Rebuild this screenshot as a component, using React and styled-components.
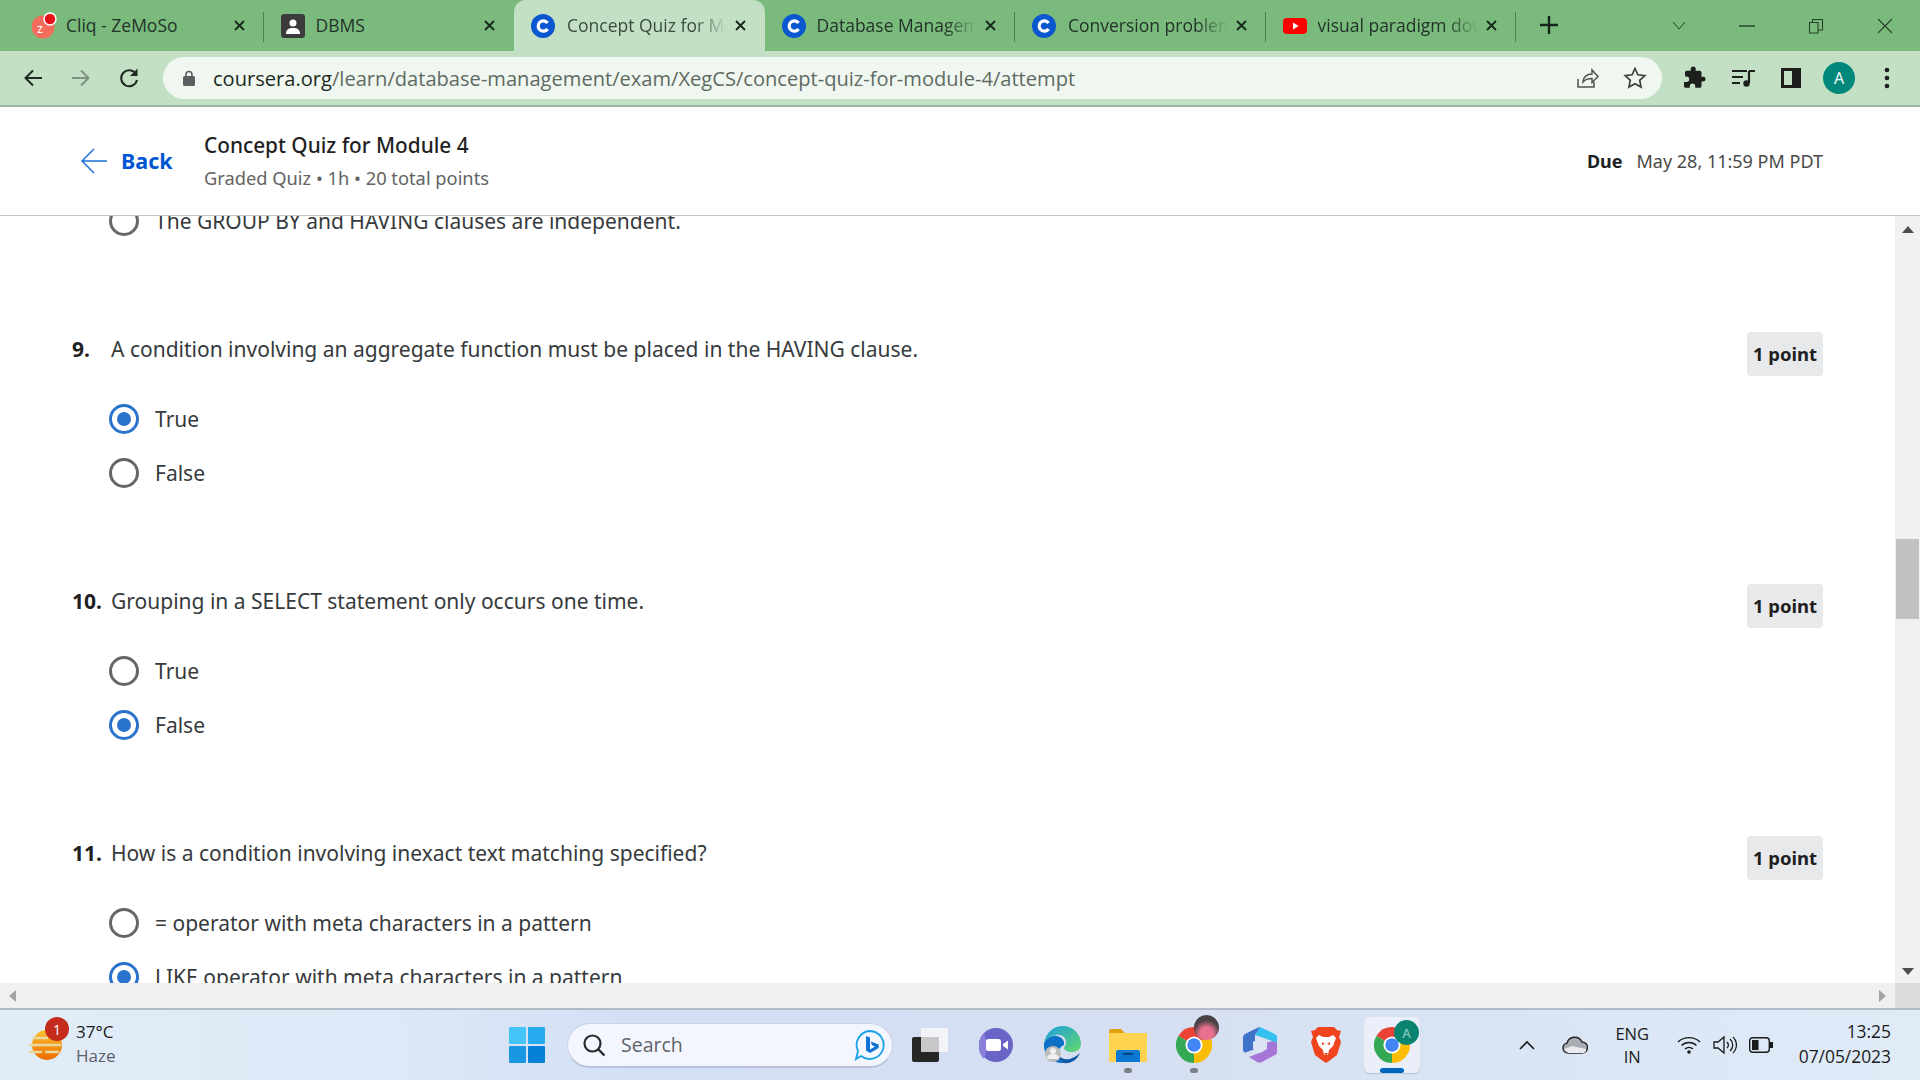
import React from 'react';
import styled, { createGlobalStyle } from 'styled-components';

const GlobalStyle = createGlobalStyle`
  html, body {
    margin: 0;
    padding: 0;
    height: 100%;
    overflow: hidden;
    background: #ffffff;
  }
`;

const uiFont = `'Open Sans', 'Noto Sans', sans-serif`;
const pageFont = `'Noto Sans', 'Open Sans', sans-serif`;

const Screen = styled.div`
  width: 1920px;
  height: 1080px;
  display: flex;
  flex-direction: column;
  overflow: hidden;
  font-family: ${pageFont};
`;

/* browser chrome */
const TabStrip = styled.div`
  height: 51px;
  flex: none;
  display: flex;
  align-items: stretch;
  padding-left: 13px;
  background: #7abb7d;
  font-family: ${uiFont};
`;

const TabItem = styled.div`
  width: 250.5px;
  flex: none;
  box-sizing: border-box;
  display: flex;
  align-items: center;
  padding: 0 19px 0 ${(p) => p.$pad}px;
  position: relative;
  background: ${(p) => (p.$active ? '#c3e0c5' : 'transparent')};
  border-radius: ${(p) => (p.$active ? '12px 12px 0 0' : '0')};

  &::after {
    content: '';
    display: ${(p) => (p.$divider ? 'block' : 'none')};
    position: absolute;
    right: 0;
    top: 12px;
    bottom: 9px;
    width: 1px;
    background: #4d7f53;
  }
`;

const TabTitle = styled.span`
  flex: 1;
  min-width: 0;
  margin-left: ${(p) => p.$gap}px;
  padding-bottom: 2px;
  white-space: nowrap;
  overflow: hidden;
  font-size: 17.5px;
  color: ${(p) => (p.$active ? '#3b4a3f' : '#233329')};
  mask-image: ${(p) => (p.$fade ? 'linear-gradient(to right, #000 80%, transparent 100%)' : 'none')};
`;

const TabClose = styled.svg`
  width: 11px;
  height: 11px;
  flex: none;
  margin-left: 8px;
`;

const NewTab = styled.svg`
  width: 18px;
  height: 18px;
  margin: 16px 0 0 24px;
`;

const WindowControls = styled.div`
  margin-left: auto;
  display: flex;
  align-items: center;
  padding-right: 27px;
  gap: 53px;
`;

const Toolbar = styled.div`
  height: 56px;
  flex: none;
  box-sizing: border-box;
  display: flex;
  align-items: center;
  background: #c3e0c5;
  border-bottom: 2px solid #9db5a0;
`;

const NavButton = styled.div`
  width: 48px;
  height: 24px;
  flex: none;
  display: flex;
  align-items: center;
  justify-content: center;
`;

const NavGroup = styled.div`
  display: flex;
  padding-left: 9px;
  width: 163px;
  box-sizing: border-box;
`;

const Omnibox = styled.div`
  width: 1499px;
  height: 42px;
  flex: none;
  box-sizing: border-box;
  display: flex;
  align-items: center;
  padding: 0 15px 0 20px;
  border-radius: 21px;
  background: #f0f7f1;
  font-family: ${uiFont};
`;

const UrlText = styled.div`
  flex: 1;
  margin-left: 18px;
  font-size: 20.1px;
  color: #5f6a62;
  white-space: nowrap;
  strong {
    font-weight: 400;
    color: #1d2a20;
  }
`;

const OmniIcons = styled.div`
  display: flex;
  gap: 24px;
  align-items: center;
`;

const ToolbarIcons = styled.div`
  display: flex;
  padding-left: 9px;
`;

const Avatar = styled.div`
  width: 32px;
  height: 32px;
  border-radius: 50%;
  background: #00897b;
  color: #fff;
  font-size: 16px;
  font-family: ${uiFont};
  display: flex;
  align-items: center;
  justify-content: center;
`;

/* coursera header */
const QuizHeader = styled.header`
  height: 109px;
  flex: none;
  box-sizing: border-box;
  display: flex;
  align-items: center;
  padding: 0 97px 0 81px;
  border-bottom: 1px solid #c4c4c4;
  background: #fff;
`;

const BackLink = styled.div`
  display: flex;
  align-items: center;
  gap: 14px;
  width: 123px;
  flex: none;
  font-size: 21.5px;
  font-weight: 700;
  color: #0056d2;
`;

const BackLabel = styled.span`
  margin-top: -2px;
`;

const HeaderTitles = styled.div`
  flex: 1;
  display: flex;
  flex-direction: column;
  gap: 6px;
`;

const QuizTitle = styled.div`
  font-size: 20.8px;
  line-height: 28px;
  font-weight: 500;
  color: #1f1f1f;
`;

const QuizMeta = styled.div`
  font-size: 18.3px;
  line-height: 26px;
  color: #636363;
`;

const DueText = styled.div`
  font-size: 18px;
  color: #4a4a4a;
  strong {
    color: #1f1f1f;
    margin-right: 14px;
  }
`;

const Viewport = styled.div`
  height: 767px;
  flex: none;
  display: flex;
  overflow: hidden;
  background: #fff;
`;

const Questions = styled.main`
  flex: 1;
  min-width: 0;
  overflow: hidden;
  padding: 0 72px 0 72px;
`;

const Question = styled.section`
  margin-top: ${(p) => (p.$first ? '-22px' : '84px')};
`;

const QuestionHead = styled.div`
  display: flex;
  align-items: flex-start;
`;

const QuestionNumber = styled.span`
  width: 39px;
  flex: none;
  font-size: 21px;
  line-height: 35px;
  font-weight: 700;
  color: #1f1f1f;
`;

const QuestionText = styled.span`
  flex: 1;
  font-size: 21px;
  line-height: 35px;
  color: #373a3c;
`;

const PointBadge = styled.span`
  width: 76px;
  height: 44px;
  flex: none;
  box-sizing: border-box;
  padding-bottom: 2px;
  display: flex;
  align-items: center;
  justify-content: center;
  border-radius: 4px;
  background: #e8e9ea;
  font-size: 18.5px;
  font-weight: 700;
  color: #1f1f1f;
`;

const Options = styled.div`
  margin-top: ${(p) => (p.$flush ? '0' : '16px')};
  padding-left: 37px;
`;

const OptionRow = styled.div`
  height: 54px;
  display: flex;
  align-items: center;
  gap: 16px;
  font-size: 21px;
  color: #373a3c;
`;

const OptionLabel = styled.span`
  margin-top: -1px;
`;

const Radio = styled.span`
  width: 30px;
  height: 30px;
  flex: none;
  box-sizing: border-box;
  display: flex;
  align-items: center;
  justify-content: center;
  border-radius: 50%;
  border: 3px solid ${(p) => (p.$checked ? '#2a73cc' : '#666666')};
  &::after {
    content: '';
    width: 14px;
    height: 14px;
    border-radius: 50%;
    background: ${(p) => (p.$checked ? '#2a73cc' : 'transparent')};
  }
`;

const VScrollbar = styled.div`
  width: 25px;
  flex: none;
  display: flex;
  flex-direction: column;
  align-items: center;
  background: #f1f1f1;
`;

const VThumb = styled.div`
  width: 23px;
  height: 80px;
  margin: 297px 0 340px;
  background: #c1c1c1;
`;

const ArrowSlot = styled.div`
  height: ${(p) => p.$h}px;
  width: 100%;
  flex: none;
  display: flex;
  align-items: center;
  justify-content: center;
`;

const HScrollbar = styled.div`
  height: 25px;
  flex: none;
  display: flex;
  background: #f0f0f0;
`;

const HTrack = styled.div`
  flex: 1;
  display: flex;
  align-items: center;
  justify-content: space-between;
  padding: 0 9px;
`;

const ScrollCorner = styled.div`
  width: 25px;
  flex: none;
  background: #dcdcdc;
`;

/* windows taskbar */
const Taskbar = styled.footer`
  height: 72px;
  flex: none;
  box-sizing: border-box;
  display: flex;
  align-items: center;
  border-top: 2px solid #b2bac6;
  background: linear-gradient(90deg, #e0ecf7 0%, #dde9f6 20%, #d3dff5 33%, #d6dff1 60%, #d8e4f3 75%, #dfebf7 100%);
  font-family: ${uiFont};
`;

const Weather = styled.div`
  width: 494px;
  flex: none;
  box-sizing: border-box;
  display: flex;
  align-items: center;
  gap: 8px;
  padding-left: 28px;
`;

const WeatherIcon = styled.div`
  width: 40px;
  height: 40px;
  position: relative;
  margin-top: 4px;
`;

const AlertBadge = styled.span`
  position: absolute;
  top: -10px;
  left: 17px;
  width: 24px;
  height: 24px;
  border-radius: 50%;
  background: #c42b1c;
  color: #fff;
  font-size: 14px;
  display: flex;
  align-items: center;
  justify-content: center;
`;

const WeatherText = styled.div`
  margin-top: -2px;
  font-size: 17px;
  line-height: 24px;
  color: #1b1b1b;
  span {
    display: block;
    color: #5d6066;
  }
`;

const AppSlot = styled.div`
  width: ${(p) => p.$wide || 66}px;
  height: 56px;
  flex: none;
  display: flex;
  align-items: center;
  justify-content: center;
  position: relative;
  box-sizing: border-box;
  border-radius: 6px;
  background: ${(p) => (p.$current ? '#ebeff9' : 'transparent')};
  box-shadow: ${(p) => (p.$current ? '0 1px 1px #b9c2d3' : 'none')};
  margin: ${(p) => (p.$current ? '0 5px' : '0')};
`;

const RunDot = styled.span`
  position: absolute;
  bottom: 0;
  left: 50%;
  transform: translateX(-50%);
  height: 5px;
  width: ${(p) => (p.$current ? '24px' : '8px')};
  border-radius: 3px;
  background: ${(p) => (p.$current ? '#0067c0' : '#7b8089')};
`;

const SearchBox = styled.div`
  width: 326px;
  height: 45px;
  flex: none;
  box-sizing: border-box;
  margin: 0 4px 0 7px;
  display: flex;
  align-items: center;
  padding: 0 6px 0 14px;
  border-radius: 23px;
  background: #f3f6fe;
  border: 1px solid #cbd3e6;
  border-bottom: 2px solid #b8c2d8;
  font-size: 19.5px;
  color: #5f6368;
`;

const SearchLabel = styled.span`
  flex: 1;
  margin-left: 15px;
`;

const Tray = styled.div`
  margin-left: auto;
  display: flex;
  align-items: center;
  padding-right: 29px;
`;

const TraySlot = styled.div`
  width: ${(p) => p.$w}px;
  flex: none;
  display: flex;
  justify-content: center;
  align-items: center;
`;

const Lang = styled.div`
  margin-right: 5px;
  font-size: 16.5px;
  line-height: 23px;
  text-align: center;
  color: #1b1b1b;
`;

const Clock = styled.div`
  margin: -2px 0 0 20px;
  font-size: 17.4px;
  line-height: 25px;
  text-align: right;
  color: #1b1b1b;
`;

const CourseraIcon = () => (
  <svg width="24" height="24" viewBox="0 0 24 24">
    <circle cx="12" cy="12" r="12" fill="#0a57d0" />
    <path d="M16.6 9a5.2 5.2 0 1 0 0 6" fill="none" stroke="#fff" strokeWidth="3.2" />
  </svg>
);

const CliqIcon = () => (
  <svg width="26" height="28" viewBox="0 0 26 28">
    <circle cx="11" cy="15" r="11.5" fill="#f26d5b" />
    <text x="5" y="21" fontSize="12" fontFamily="Liberation Sans" fill="#fff">z</text>
    <circle cx="18" cy="7" r="6" fill="#e8111b" stroke="#fff" strokeWidth="1.5" />
  </svg>
);

const DbmsIcon = () => (
  <svg width="24" height="24" viewBox="0 0 24 24">
    <rect width="24" height="24" rx="3" fill="#3b3b3e" />
    <circle cx="12" cy="9" r="3.5" fill="#fff" />
    <path d="M5 20c0-5 3-6 7-6s7 1 7 6z" fill="#fff" />
  </svg>
);

const YoutubeIcon = () => (
  <svg width="24" height="24" viewBox="0 0 24 24">
    <rect y="4" width="24" height="16" rx="4" fill="#ff0000" />
    <path d="M10 8.5l5.5 3.5-5.5 3.5z" fill="#fff" />
  </svg>
);

const CloseX = () => (
  <TabClose viewBox="0 0 11 11">
    <path d="M1 1l9 9M10 1l-9 9" stroke="#17261b" strokeWidth="1.8" />
  </TabClose>
);

const ChromeIcon = ({ size = 36 }) => (
  <svg width={size} height={size} viewBox="0 0 32 32">
    <path d="M16 16L2.14 8A16 16 0 0 1 29.86 8z" fill="#ea4335" />
    <path d="M16 16L2.14 8A16 16 0 0 0 16 32z" fill="#34a853" />
    <path d="M16 16L29.86 8A16 16 0 0 1 16 32z" fill="#fbbc04" />
    <circle cx="16" cy="16" r="7.6" fill="#fff" />
    <circle cx="16" cy="16" r="6" fill="#4285f4" />
  </svg>
);

const ChromeOverlay = styled.span`
  position: absolute;
  top: ${(p) => p.$top}px;
  left: ${(p) => p.$left}px;
  width: 25px;
  height: 25px;
  border-radius: 50%;
  background: ${(p) => p.$bg};
  color: #7cc7b4;
  font-size: 13px;
  font-weight: 600;
  display: flex;
  align-items: center;
  justify-content: center;
`;

const tabs = [
  { title: 'Cliq - ZeMoSo', icon: <CliqIcon />, pad: 19, gap: 8, divider: true },
  { title: 'DBMS', icon: <DbmsIcon />, pad: 17, gap: 11, divider: false },
  { title: 'Concept Quiz for Module 4', icon: <CourseraIcon />, pad: 17, gap: 12, active: true, fade: true },
  { title: 'Database Management', icon: <CourseraIcon />, pad: 17, gap: 11, divider: true, fade: true },
  { title: 'Conversion problem', icon: <CourseraIcon />, pad: 17, gap: 12, divider: true, fade: true },
  { title: 'visual paradigm download', icon: <YoutubeIcon />, pad: 17, gap: 11, divider: true, fade: true },
];

const questions = [
  {
    id: 9,
    text: 'A condition involving an aggregate function must be placed in the HAVING clause.',
    options: [{ label: 'True', checked: true }, { label: 'False' }],
  },
  {
    id: 10,
    text: 'Grouping in a SELECT statement only occurs one time.',
    options: [{ label: 'True' }, { label: 'False', checked: true }],
  },
  {
    id: 11,
    text: 'How is a condition involving inexact text matching specified?',
    options: [
      { label: '= operator with meta characters in a pattern' },
      { label: 'LIKE operator with meta characters in a pattern', checked: true },
    ],
  },
];

const Browser = () => (
  <>
    <TabStrip>
      {tabs.map((tab) => (
        <TabItem key={tab.title} $active={tab.active} $divider={tab.divider} $pad={tab.pad}>
          {tab.icon}
          <TabTitle $gap={tab.gap} $active={tab.active} $fade={tab.fade}>{tab.title}</TabTitle>
          <CloseX />
        </TabItem>
      ))}
      <NewTab viewBox="0 0 18 18">
        <path d="M9 0v18M0 9h18" stroke="#17261b" strokeWidth="2.4" />
      </NewTab>
      <WindowControls>
        <svg width="14" height="9" viewBox="0 0 14 9"><path d="M1 1l6 7 6-7" fill="none" stroke="#26402c" strokeWidth="1" /></svg>
        <svg width="16" height="2" viewBox="0 0 16 2"><path d="M0 1h16" stroke="#26402c" strokeWidth="1.4" /></svg>
        <svg width="16" height="16" viewBox="0 0 16 16"><path d="M1.5 4.500h8.500v10.500H1.500zM4.500 4V1.500h10V12H10.500" fill="none" stroke="#26402c" strokeWidth="1.100" /></svg>
        <svg width="16" height="16" viewBox="0 0 16 16"><path d="M1 1l14 14M15 1L1 15" stroke="#26402c" strokeWidth="1.100" /></svg>
      </WindowControls>
    </TabStrip>
    <Toolbar>
      <NavGroup>
        <NavButton>
          <svg width="20" height="20" viewBox="0 0 20 20"><path d="M19 10H3M10 2.500L2.500 10l7.500 7.500" fill="none" stroke="#1f2a22" strokeWidth="2" /></svg>
        </NavButton>
        <NavButton>
          <svg width="20" height="20" viewBox="0 0 20 20"><path d="M1 10h16M10 2.500l7.500 7.500-7.500 7.500" fill="none" stroke="#7d917f" strokeWidth="2" /></svg>
        </NavButton>
        <NavButton>
          <svg width="22" height="22" viewBox="0 0 22 22"><path d="M18 7a8 8 0 1 0 1 6" fill="none" stroke="#1f2a22" strokeWidth="2" /><path d="M19.500 1.500v7.500H12z" fill="#1f2a22" /></svg>
        </NavButton>
      </NavGroup>
      <Omnibox>
        <svg width="12" height="16" viewBox="0 0 12 16"><path d="M3 6V4.500a3 3 0 0 1 6 0V6" fill="none" stroke="#5a5f62" strokeWidth="1.600" /><rect y="6" width="12" height="10" rx="1.500" fill="#5a5f62" /></svg>
        <UrlText><strong>coursera.org</strong>/learn/database-management/exam/XegCS/concept-quiz-for-module-4/attempt</UrlText>
        <OmniIcons>
          <svg width="24" height="24" viewBox="0 0 24 24"><path d="M3 13v8h16v-5M8 16c0-5 4-8 9-8V4l6 6.500-6 6v-4c-4 0-7 1-9 3.500z" fill="none" stroke="#4a544c" strokeWidth="1.500" /></svg>
          <svg width="24" height="24" viewBox="0 0 24 24"><path d="M12 2.500l2.900 6.300 6.900.8-5.100 4.700 1.400 6.800-6.100-3.400-6.100 3.400 1.400-6.800-5.100-4.700 6.900-.8z" fill="none" stroke="#3a423c" strokeWidth="1.700" /></svg>
        </OmniIcons>
      </Omnibox>
      <ToolbarIcons>
        <NavButton>
          <svg width="24" height="24" viewBox="0 0 24 24"><path d="M20 11h-1.500V6.500c0-1-.9-1.800-1.800-1.800h-4V3a2.500 2.500 0 0 0-5 0v1.700h-4c-1 0-1.700.8-1.700 1.800v4h1.500a2.700 2.700 0 0 1 0 5.400H1v4c0 1 .8 1.800 1.800 1.800h4v-1.500a2.700 2.700 0 0 1 5.400 0v1.500h4.500c1 0 1.800-.8 1.800-1.800v-4.500H20a2.500 2.500 0 0 0 0-5z" fill="#1d1f1d" /></svg>
        </NavButton>
        <NavButton>
          <svg width="24" height="20" viewBox="0 0 24 20"><path d="M1 3h15M1 9h11M1 15h8" stroke="#1d1f1d" strokeWidth="2.200" /><path d="M18 3h6M18 3v12" stroke="#1d1f1d" strokeWidth="2.200" /><circle cx="15.500" cy="15.500" r="3.200" fill="#1d1f1d" /></svg>
        </NavButton>
        <NavButton>
          <svg width="20" height="20" viewBox="0 0 20 20"><path d="M0 0h20v20H0zM3 3v14h8V3z" fill="#1d1f1d" fillRule="evenodd" /></svg>
        </NavButton>
        <NavButton><Avatar>A</Avatar></NavButton>
        <NavButton>
          <svg width="6" height="22" viewBox="0 0 6 22"><circle cx="3" cy="3" r="2.300" fill="#1d1f1d" /><circle cx="3" cy="11" r="2.300" fill="#1d1f1d" /><circle cx="3" cy="19" r="2.300" fill="#1d1f1d" /></svg>
        </NavButton>
      </ToolbarIcons>
    </Toolbar>
  </>
);

const QuizPage = () => (
  <>
    <QuizHeader>
      <BackLink>
        <svg width="26" height="26" viewBox="0 0 26 26"><path d="M26 13H1M13 1L1 13l12 12" fill="none" stroke="#1f6fdb" strokeWidth="1.500" /></svg>
        <BackLabel>Back</BackLabel>
      </BackLink>
      <HeaderTitles>
        <QuizTitle>Concept Quiz for Module 4</QuizTitle>
        <QuizMeta>Graded Quiz • 1h • 20 total points</QuizMeta>
      </HeaderTitles>
      <DueText><strong>Due</strong>May 28, 11:59 PM PDT</DueText>
    </QuizHeader>
    <Viewport>
      <Questions>
        <Question $first>
          <Options $flush>
            <OptionRow><Radio /><OptionLabel>The GROUP BY and HAVING clauses are independent.</OptionLabel></OptionRow>
          </Options>
        </Question>
        {questions.map((q) => (
          <Question key={q.id}>
            <QuestionHead>
              <QuestionNumber>{q.id}.</QuestionNumber>
              <QuestionText>{q.text}</QuestionText>
              <PointBadge>1 point</PointBadge>
            </QuestionHead>
            <Options>
              {q.options.map((o) => (
                <OptionRow key={o.label}><Radio $checked={o.checked} /><OptionLabel>{o.label}</OptionLabel></OptionRow>
              ))}
            </Options>
          </Question>
        ))}
      </Questions>
      <VScrollbar>
        <ArrowSlot $h={26}><svg width="12" height="7" viewBox="0 0 12 7"><path d="M6 0l6 7H0z" fill="#4d4d4d" /></svg></ArrowSlot>
        <VThumb />
        <ArrowSlot $h={24}><svg width="12" height="7" viewBox="0 0 12 7"><path d="M6 7L0 0h12z" fill="#4d4d4d" /></svg></ArrowSlot>
      </VScrollbar>
    </Viewport>
    <HScrollbar>
      <HTrack>
        <svg width="7" height="12" viewBox="0 0 7 12"><path d="M0 6l7-6v12z" fill="#a3a3a3" /></svg>
        <svg width="7" height="12" viewBox="0 0 7 12"><path d="M7 6L0 0v12z" fill="#a3a3a3" /></svg>
      </HTrack>
      <ScrollCorner />
    </HScrollbar>
  </>
);

const EdgeIcon = () => (
  <svg width="38" height="38" viewBox="0 0 38 38">
    <path d="M1 17C3 6 11 0 20 0c10 0 18 8 18 18 0 5-4 8-9 8-4 0-8-2-8-4 0-1 2-2 2-6 0-5-5-8-10-7C7 10 3 13 1 17z" fill="url(#edgeTop)" />
    <path d="M1 17c3-5 8-8 13-7 5 1 8 5 7 9-3 1-6 5-6 10 0 3 2 6 5 8C9 37 0 29 1 17z" fill="#0c70c7" />
    <path d="M20 37c-3-2-5-5-5-8 4 5 12 7 22-2-3 7-9 11-17 10z" fill="#0b57a4" />
    <circle cx="10" cy="28" r="8" fill="#bdbdbd" />
    <circle cx="10" cy="25" r="3" fill="#f0f0f0" />
    <path d="M4 33c0-4 3-5 6-5s6 1 6 5z" fill="#f0f0f0" />
    <defs>
      <linearGradient id="edgeTop" x1="0" y1="0" x2="1" y2="1">
        <stop offset="0" stopColor="#1b9de2" />
        <stop offset="1" stopColor="#62d96a" />
      </linearGradient>
    </defs>
  </svg>
);

const FolderIcon = () => (
  <svg width="38" height="34" viewBox="0 0 38 34">
    <path d="M0 3a2 2 0 0 1 2-2h10l4 4h22v6H0z" fill="#e0a30f" />
    <rect y="5" width="38" height="29" rx="1.500" fill="#fdd34f" />
    <path d="M7 34V24a2 2 0 0 1 2-2h20a2 2 0 0 1 2 2v10z" fill="#0a78d1" />
    <rect x="14" y="25" width="10" height="1.800" fill="#063e78" />
  </svg>
);

const OfficeIcon = () => (
  <svg width="34" height="36" viewBox="0 0 34 36">
    <path d="M17 0l15 7c1.500.8 2 2 2 3v6L21 11l-9-3z" fill="#36c0ef" />
    <path d="M12 8l5-8-3 1-12 6C.5 8 0 9.500 0 11v12c0 2 2 3 4 2l8-3z" fill="#3f72c9" />
    <path d="M34 16v9c0 1.500-.5 2.500-2 3l-13 7c-2 1-3 1-5 0L6 30l15-6-4-7 13-3z" fill="#a676d6" />
    <path d="M17 11l7 4v7l-7 4-7-4v-7z" fill="#dce4f4" />
  </svg>
);

const BraveIcon = () => (
  <svg width="30" height="36" viewBox="0 0 30 36">
    <path d="M7 0h16l3 3 4 1-2 6 2 5-4 13-8 6-3 2-3-2-8-6L0 15l2-5L0 4l4-1z" fill="#f0441f" />
    <path d="M8 8l4 2h6l4-2 3 3-3 8-4 4-1 5h-4l-1-5-4-4-3-8z" fill="#fff" />
    <path d="M11 15l3 2-3 1zM19 15l-3 2 3 1zM13 26h4l-2 3z" fill="#f0441f" />
  </svg>
);

const Dock = () => (
  <>
    <AppSlot>
      <svg width="36" height="36" viewBox="0 0 36 36">
        <rect width="17" height="17" rx="1" fill="#45c4f7" />
        <rect x="19" width="17" height="17" rx="1" fill="#27aaee" />
        <rect y="19" width="17" height="17" rx="1" fill="#1a97e3" />
        <rect x="19" y="19" width="17" height="17" rx="1" fill="#0681d8" />
      </svg>
    </AppSlot>
    <SearchBox>
      <svg width="24" height="24" viewBox="0 0 24 24"><circle cx="10.500" cy="10.500" r="8" fill="none" stroke="#2a2a2a" strokeWidth="2.200" /><path d="M16.500 16.500l6 6" stroke="#2a2a2a" strokeWidth="2.400" /></svg>
      <SearchLabel>Search</SearchLabel>
      <svg width="32" height="32" viewBox="0 0 32 32"><path d="M16 2a14 14 0 1 1-9 25l-5 3 2-8A14 14 0 0 1 16 2z" fill="#f4f8fe" stroke="#1aa0e8" strokeWidth="1.800" /><path d="M12 7l4 1.500v12l5-3-3-1.300-1.300-3.700 8 3v3.500l-8.700 5-4-2.500z" fill="#1372d6" /></svg>
    </SearchBox>
    <AppSlot>
      <svg width="36" height="34" viewBox="0 0 36 34">
        <rect y="9" width="27" height="25" rx="2" fill="#262626" />
        <rect x="9" width="27" height="24" rx="2" fill="#f6f6f8" fillOpacity="0.9" />
        <rect x="9" y="9" width="18" height="15" fill="#c8c8c8" />
      </svg>
    </AppSlot>
    <AppSlot>
      <svg width="36" height="36" viewBox="0 0 36 36">
        <circle cx="18" cy="18" r="17" fill="#6a64c8" />
        <path d="M1 18a17 17 0 0 1 5-12l4 12-4 14a17 17 0 0 1-5-14z" fill="#8a7fd8" />
        <rect x="8" y="12" width="15" height="12" rx="2.500" fill="#fff" />
        <path d="M25 17l5-3.500v9L25 19z" fill="#fff" />
      </svg>
    </AppSlot>
    <AppSlot><EdgeIcon /></AppSlot>
    <AppSlot><FolderIcon /><RunDot /></AppSlot>
    <AppSlot>
      <ChromeIcon />
      <ChromeOverlay $top={-2} $left={33} $bg="radial-gradient(circle at 50% 75%, #e8718f 0 28%, #4a4145 60%)" />
      <RunDot />
    </AppSlot>
    <AppSlot><OfficeIcon /></AppSlot>
    <AppSlot><BraveIcon /></AppSlot>
    <AppSlot $wide={56} $current>
      <ChromeIcon />
      <ChromeOverlay $top={3} $left={30} $bg="#0a8470">A</ChromeOverlay>
      <RunDot $current />
    </AppSlot>
  </>
);

const SystemTray = () => (
  <Tray>
    <TraySlot $w={48}>
      <svg width="16" height="10" viewBox="0 0 16 10"><path d="M1 9l7-7 7 7" fill="none" stroke="#1b1b1b" strokeWidth="1.600" /></svg>
    </TraySlot>
    <TraySlot $w={48}>
      <svg width="26" height="18" viewBox="0 0 26 18"><path d="M6 17a5 5 0 0 1-1-9.900A8 8 0 0 1 20 6a5.500 5.500 0 0 1 0 11z" fill="#a9aeb4" stroke="#222" strokeWidth="1.400" /><path d="M2 13l8-3 14 3v2l-2 2H6z" fill="#e9ebee" /></svg>
    </TraySlot>
    <TraySlot $w={72}><Lang>ENG<br />IN</Lang></TraySlot>
    <TraySlot $w={36}>
      <svg width="24" height="18" viewBox="0 0 24 18"><path d="M1 6a16 16 0 0 1 22 0M4.500 9.500a11 11 0 0 1 15 0M8 13a6 6 0 0 1 8 0" fill="none" stroke="#1b1b1b" strokeWidth="1.400" /><circle cx="12" cy="16" r="1.800" fill="#1b1b1b" /></svg>
    </TraySlot>
    <TraySlot $w={36}>
      <svg width="24" height="20" viewBox="0 0 24 20"><path d="M1 7h4l6-5v16l-6-5H1z" fill="none" stroke="#1b1b1b" strokeWidth="1.300" /><path d="M14 7a4 4 0 0 1 0 6M17 4a8 8 0 0 1 0 12M20 2a11 11 0 0 1 0 16" fill="none" stroke="#1b1b1b" strokeWidth="1.300" /></svg>
    </TraySlot>
    <TraySlot $w={36}>
      <svg width="24" height="16" viewBox="0 0 24 16"><rect x=".7" y=".7" width="19.600" height="14.600" rx="3" fill="none" stroke="#1b1b1b" strokeWidth="1.400" /><rect x="3" y="3" width="6.500" height="10" fill="#1b1b1b" /><rect x="21" y="5" width="3" height="6" fill="#1b1b1b" /></svg>
    </TraySlot>
    <Clock>13:25<br />07/05/2023</Clock>
  </Tray>
);

const App = () => (
  <Screen>
    <GlobalStyle />
    <Browser />
    <QuizPage />
    <Taskbar>
      <Weather>
        <WeatherIcon>
          <svg width="36" height="36" viewBox="0 0 36 36">
            <circle cx="19" cy="18" r="15" fill="url(#sun)" />
            <path d="M6 11h13M2 18h30M2 25h11M18 25h12" stroke="#e9d9a0" strokeWidth="2.600" strokeLinecap="round" />
            <defs>
              <linearGradient id="sun" x1="0" y1="0" x2="0" y2="1">
                <stop offset="0" stopColor="#fbc02d" />
                <stop offset="1" stopColor="#ee6c00" />
              </linearGradient>
            </defs>
          </svg>
          <AlertBadge>1</AlertBadge>
        </WeatherIcon>
        <WeatherText>37°C<span>Haze</span></WeatherText>
      </Weather>
      <Dock />
      <SystemTray />
    </Taskbar>
  </Screen>
);

export default App;
